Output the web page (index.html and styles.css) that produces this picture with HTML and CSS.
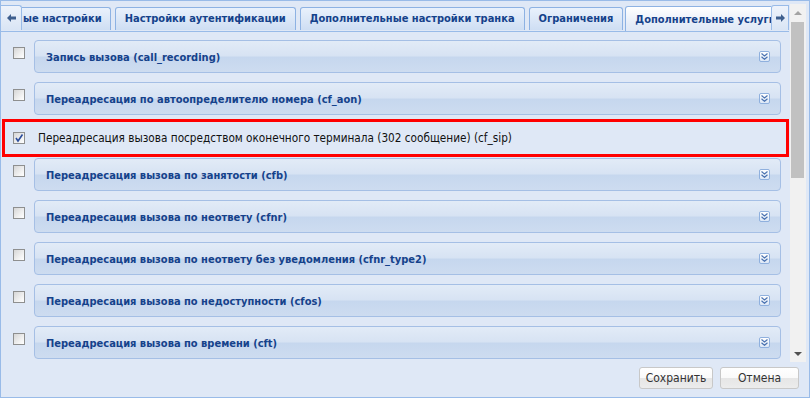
FILE: index.html
```html
<!DOCTYPE html>
<html lang="ru">
<head>
    <meta charset="UTF-8">
    <title>Дополнительные услуги</title>
    <link rel="stylesheet" href="styles.css">
</head>
<body>
    <div class="window">
        <div class="scroll-area">
            <div class="content">
                <div class="tabstrip">
                    <div class="tab-scroll left">
                        <svg width="9" height="8" viewBox="0 0 9 8"><path d="M0 4 L4 0 L4 2.5 L9 2.5 L9 5.5 L4 5.5 L4 8 Z" fill="#3e5f8e"/></svg>
                    </div>
                    <div class="tabs">
                        <div class="tab first">ые настройки</div>
                        <div class="tab">Настройки аутентификации</div>
                        <div class="tab">Дополнительные настройки транка</div>
                        <div class="tab">Ограничения</div>
                        <div class="tab active">Дополнительные услуги</div>
                    </div>
                    <div class="tab-scroll right">
                        <svg width="9" height="8" viewBox="0 0 9 8"><path d="M9 4 L5 0 L5 2.5 L0 2.5 L0 5.5 L5 5.5 L5 8 Z" fill="#3e5f8e"/></svg>
                    </div>
                </div>

                <div class="tab-body">
                    <div class="row">
                        <span class="check"></span>
                        <div class="panel">
                            <span class="panel-title">Запись вызова (call_recording)</span>
                            <span class="expand"><svg width="7" height="7" viewBox="0 0 7 7"><path d="M0.5 0.5 L3.5 3 L6.5 0.5 M0.5 3.8 L3.5 6.3 L6.5 3.8" fill="none" stroke="#4a72b0" stroke-width="1.2"/></svg></span>
                        </div>
                    </div>
                    <div class="row">
                        <span class="check"></span>
                        <div class="panel">
                            <span class="panel-title">Переадресация по автоопределителю номера (cf_aon)</span>
                            <span class="expand"><svg width="7" height="7" viewBox="0 0 7 7"><path d="M0.5 0.5 L3.5 3 L6.5 0.5 M0.5 3.8 L3.5 6.3 L6.5 3.8" fill="none" stroke="#4a72b0" stroke-width="1.2"/></svg></span>
                        </div>
                    </div>
                    <div class="row highlight">
                        <span class="check checked">
                            <svg width="10" height="10" viewBox="0 0 10 10"><path d="M2 5 L4 8 L8.5 1.5" fill="none" stroke="#2b4d9c" stroke-width="1.6"/></svg>
                        </span>
                        <span class="plain-label">Переадресация вызова посредством оконечного терминала (302 сообщение) (cf_sip)</span>
                    </div>
                    <div class="row">
                        <span class="check"></span>
                        <div class="panel">
                            <span class="panel-title">Переадресация вызова по занятости (cfb)</span>
                            <span class="expand"><svg width="7" height="7" viewBox="0 0 7 7"><path d="M0.5 0.5 L3.5 3 L6.5 0.5 M0.5 3.8 L3.5 6.3 L6.5 3.8" fill="none" stroke="#4a72b0" stroke-width="1.2"/></svg></span>
                        </div>
                    </div>
                    <div class="row">
                        <span class="check"></span>
                        <div class="panel">
                            <span class="panel-title">Переадресация вызова по неответу (cfnr)</span>
                            <span class="expand"><svg width="7" height="7" viewBox="0 0 7 7"><path d="M0.5 0.5 L3.5 3 L6.5 0.5 M0.5 3.8 L3.5 6.3 L6.5 3.8" fill="none" stroke="#4a72b0" stroke-width="1.2"/></svg></span>
                        </div>
                    </div>
                    <div class="row">
                        <span class="check"></span>
                        <div class="panel">
                            <span class="panel-title">Переадресация вызова по неответу без уведомления (cfnr_type2)</span>
                            <span class="expand"><svg width="7" height="7" viewBox="0 0 7 7"><path d="M0.5 0.5 L3.5 3 L6.5 0.5 M0.5 3.8 L3.5 6.3 L6.5 3.8" fill="none" stroke="#4a72b0" stroke-width="1.2"/></svg></span>
                        </div>
                    </div>
                    <div class="row">
                        <span class="check"></span>
                        <div class="panel">
                            <span class="panel-title">Переадресация вызова по недоступности (cfos)</span>
                            <span class="expand"><svg width="7" height="7" viewBox="0 0 7 7"><path d="M0.5 0.5 L3.5 3 L6.5 0.5 M0.5 3.8 L3.5 6.3 L6.5 3.8" fill="none" stroke="#4a72b0" stroke-width="1.2"/></svg></span>
                        </div>
                    </div>
                    <div class="row">
                        <span class="check"></span>
                        <div class="panel">
                            <span class="panel-title">Переадресация вызова по времени (cft)</span>
                            <span class="expand"><svg width="7" height="7" viewBox="0 0 7 7"><path d="M0.5 0.5 L3.5 3 L6.5 0.5 M0.5 3.8 L3.5 6.3 L6.5 3.8" fill="none" stroke="#4a72b0" stroke-width="1.2"/></svg></span>
                        </div>
                    </div>
                </div>
            </div>

            <div class="scrollbar">
                <div class="sb-arrow up"></div>
                <div class="sb-track"><div class="sb-thumb"></div></div>
                <div class="sb-arrow down"></div>
            </div>
        </div>

        <div class="footer">
            <button class="btn save">Сохранить</button>
            <button class="btn cancel">Отмена</button>
        </div>
    </div>
</body>
</html>
```

FILE: styles.css
```css
body {
    margin: 0;
    background-color: #ffffff;
    font-family: "DejaVu Sans Condensed", "DejaVu Sans", sans-serif;
}

.window {
    width: 810px;
    height: 398px;
    box-sizing: border-box;
    border: 1px solid #99bbe8;
    background-color: #dfe8f6;
    display: flex;
    flex-direction: column;
}

.scroll-area {
    display: flex;
    height: 358px;
    margin-top: 3px;
}

.content {
    flex: 1;
    overflow: hidden;
}

/* tab strip */

.tabstrip {
    display: flex;
    align-items: flex-end;
    height: 27px;
    border-bottom: 1px solid #99bbe8;
    box-sizing: content-box;
}

.tab-scroll {
    height: 25px;
    box-sizing: border-box;
    display: flex;
    align-items: center;
    justify-content: center;
    background: linear-gradient(#eef3fb, #d9e5f5);
    border: 1px solid #99bbe8;
    border-bottom: none;
    margin-bottom: 1px;
}

.tab-scroll.left {
    width: 21px;
    border-left: none;
    border-radius: 0 3px 0 0;
}

.tab-scroll.right {
    width: 18px;
    border-radius: 3px 0 0 0;
}

.tabs {
    flex: 1;
    display: flex;
    align-items: flex-end;
    gap: 4px;
    overflow: hidden;
    height: 100%;
}

.tab {
    flex-shrink: 0;
    height: 23px;
    line-height: 22px;
    box-sizing: border-box;
    padding: 0 9px;
    margin-bottom: 1px;
    border: 1px solid #8db2e3;
    border-bottom: none;
    border-radius: 3px 3px 0 0;
    background: linear-gradient(#e9f1fc, #cedef3);
    color: #15428b;
    font-size: 11px;
    font-weight: bold;
    white-space: nowrap;
}

.tab.first {
    padding-left: 1px;
    padding-right: 8px;
    border-left: none;
    border-radius: 0 3px 0 0;
}

.tab.active {
    height: 26px;
    line-height: 25px;
    margin-bottom: -1px;
    margin-left: -2px;
    background: linear-gradient(#ffffff, #e4ecf8 70%, #dfe8f6);
    padding-right: 0;
}

/* tab body */

.tab-body {
    padding: 8px 0 0 12px;
}

.row {
    display: flex;
    align-items: flex-start;
    margin-bottom: 9px;
}

.check {
    flex-shrink: 0;
    width: 12px;
    height: 12px;
    box-sizing: border-box;
    margin-top: 7px;
    border: 1px solid #8e8f8f;
    background: linear-gradient(135deg, #d6d6d6, #f4f4f4 70%, #ffffff);
    display: flex;
    align-items: center;
    justify-content: center;
}

.panel {
    flex: 1;
    height: 33px;
    box-sizing: border-box;
    margin: 0 8px 0 9px;
    padding: 0 10px 0 11px;
    border: 1px solid #a5bfe5;
    border-radius: 4px;
    background: linear-gradient(#e2ebf7 0%, #d7e3f3 48%, #c6d7ee 52%, #cddcf0 100%);
    display: flex;
    align-items: center;
    justify-content: space-between;
}

.panel-title {
    color: #15428b;
    font-size: 11px;
    font-weight: bold;
    padding-top: 1px;
}

.expand {
    width: 11px;
    height: 11px;
    box-sizing: border-box;
    border: 1px solid #8fb0de;
    border-radius: 2px;
    background: linear-gradient(#ffffff, #dce7f6);
    display: flex;
    align-items: center;
    justify-content: center;
}

.row.highlight {
    align-items: center;
    height: 38px;
    box-sizing: border-box;
    margin: -5px 0 1px -11px;
    padding-left: 8px;
    border: 3px solid #ff0000;
}

.row.highlight .check {
    margin-top: 0;
}

.plain-label {
    margin-left: 13px;
    font-size: 11.7px;
    color: #111111;
}

/* scrollbar */

.scrollbar {
    width: 16px;
    margin: 0 3px 0 1px;
    background-color: #f1f1f1;
    display: flex;
    flex-direction: column;
}

.sb-arrow {
    height: 17px;
    flex-shrink: 0;
    display: flex;
    align-items: center;
    justify-content: center;
}

.sb-arrow::after {
    content: "";
    border-left: 4px solid transparent;
    border-right: 4px solid transparent;
}

.sb-arrow.up::after {
    border-bottom: 4px solid #a3a3a3;
}

.sb-arrow.down::after {
    border-top: 4px solid #505050;
}

.sb-track {
    flex: 1;
}

.sb-thumb {
    height: 156px;
    margin: 1px 2px 0 1px;
    background-color: #c1c1c1;
}

/* footer */

.footer {
    flex: 1;
    display: flex;
    justify-content: flex-end;
    align-items: flex-start;
    gap: 7px;
    padding: 5px 10px 0 0;
}

.btn {
    height: 22px;
    padding: 0;
    border: 1px solid #c8c8c8;
    border-radius: 3px;
    background: linear-gradient(#ffffff 0%, #fafafa 50%, #e6e6e6 52%, #ececec 100%);
    color: #333333;
    font-family: "DejaVu Sans Condensed", "DejaVu Sans", sans-serif;
    font-size: 12px;
    cursor: pointer;
}

.btn.save {
    width: 74px;
}

.btn.cancel {
    width: 79px;
}
```
